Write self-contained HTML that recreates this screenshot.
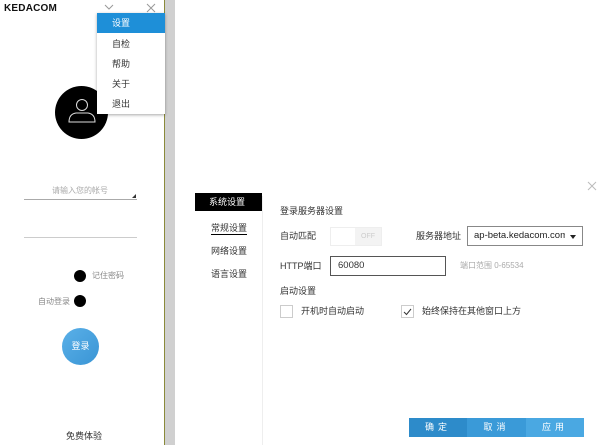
<!DOCTYPE html><html><head><meta charset="utf-8"><style>
*{margin:0;padding:0;box-sizing:border-box}
body{width:600px;height:445px;background:#fff;position:relative;overflow:hidden;font-family:"Liberation Sans","Noto Sans CJK SC",sans-serif;font-size:9px;color:#333;line-height:12px}
.a{position:absolute}
.c{display:flex;align-items:center}
</style></head><body>
<div class="a" style="left:4px;top:3px;font-weight:bold;font-size:10px;color:#111;letter-spacing:.2px">KEDACOM</div>
<svg class="a" style="left:104px;top:4px" width="10" height="6"><path d="M1 1 L5 5 L9 1" fill="none" stroke="#999" stroke-width="1"/></svg>
<svg class="a" style="left:146px;top:3px" width="10" height="10"><path d="M1 1 L9 9 M9 1 L1 9" fill="none" stroke="#999" stroke-width="1"/></svg>
<div class="a" style="left:164px;top:0;width:1px;height:445px;background:#8a8a3a"></div>
<div class="a" style="left:165px;top:0;width:10px;height:445px;background:#d0d0d0"></div>
<div class="a" style="left:55px;top:86px;width:53px;height:53px;border-radius:50%;background:#000"></div>
<svg class="a" style="left:66px;top:96px" width="32" height="30" viewBox="0 0 32 30"><circle cx="16" cy="9" r="5.5" fill="none" stroke="#ddd" stroke-width="1"/><path d="M3 26 Q3 18 10 17 L22 17 Q29 18 29 26 Z" fill="none" stroke="#ddd" stroke-width="1"/></svg>
<div class="a" style="left:97px;top:13px;width:68px;height:101px;background:#fff;box-shadow:0 1px 3px rgba(0,0,0,.35)"></div>
<div class="a" style="left:97px;top:13px;width:68px;height:20px;background:#1e8fd8"></div>
<div class="a" style="left:112px;top:17px;color:#fff">设置</div>
<div class="a" style="left:112px;top:38px">自检</div>
<div class="a" style="left:112px;top:58px">帮助</div>
<div class="a" style="left:112px;top:78px">关于</div>
<div class="a" style="left:112px;top:98px">退出</div>
<div class="a" style="left:52px;top:185px;color:#aaa;font-size:8px">请输入您的帐号</div>
<div class="a" style="left:24px;top:199px;width:113px;height:1px;background:#aaa"></div>
<div class="a" style="left:132px;top:194px;width:0;height:0;border-left:4px solid transparent;border-bottom:4px solid #333"></div>
<div class="a" style="left:24px;top:237px;width:113px;height:1px;background:#ccc"></div>
<div class="a" style="left:74px;top:270px;width:12px;height:12px;border-radius:50%;background:#000"></div>
<div class="a" style="left:92px;top:270px;color:#888;font-size:8px">记住密码</div>
<div class="a" style="left:38px;top:296px;color:#888;font-size:8px">自动登录</div>
<div class="a" style="left:74px;top:295px;width:12px;height:12px;border-radius:50%;background:#000"></div>
<div class="a" style="left:62px;top:328px;width:37px;height:37px;border-radius:50%;background:linear-gradient(135deg,#5ab0e8,#3a95d5);color:#fff;text-align:center;line-height:37px">登录</div>
<div class="a" style="left:66px;top:430px;color:#333">免费体验</div>
<svg class="a" style="left:587px;top:181px" width="10" height="10"><path d="M1 1 L9 9 M9 1 L1 9" fill="none" stroke="#bbb" stroke-width="1"/></svg>
<div class="a" style="left:195px;top:193px;width:67px;height:18px;background:#000;color:#fff;line-height:18px;padding-left:14px">系统设置</div>
<div class="a" style="left:262px;top:196px;width:1px;height:249px;background:#eee"></div>
<div class="a" style="left:211px;top:222px;border-bottom:1px solid #000;line-height:12px">常规设置</div>
<div class="a" style="left:211px;top:245px">网络设置</div>
<div class="a" style="left:211px;top:268px">语言设置</div>
<div class="a" style="left:280px;top:205px">登录服务器设置</div>
<div class="a" style="left:280px;top:230px">自动匹配</div>
<div class="a" style="left:330px;top:227px;width:52px;height:19px;border:1px solid #eee;background:#fff"></div>
<div class="a" style="left:355px;top:228px;width:26px;height:17px;background:#f3f3f3;color:#ccc;font-size:7px;text-align:center;line-height:17px">OFF</div>
<div class="a" style="left:416px;top:230px">服务器地址</div>
<div class="a c" style="left:467px;top:226px;width:116px;height:20px;border:1px solid #888;padding-left:6px;font-size:9.5px;color:#222;overflow:hidden;white-space:nowrap">ap-beta.kedacom.com</div>
<div class="a" style="left:565px;top:227px;width:16px;height:18px;background:#fff"></div>
<div class="a" style="left:570px;top:235px;border-left:3px solid transparent;border-right:3px solid transparent;border-top:4px solid #222"></div>
<div class="a" style="left:280px;top:260px;font-size:9px">HTTP端口</div>
<div class="a c" style="left:330px;top:256px;width:116px;height:20px;border:1px solid #555;padding-left:7px;font-size:9.5px">60080</div>
<div class="a" style="left:460px;top:260px;color:#aaa;font-size:8px">端口范围 0-65534</div>
<div class="a" style="left:280px;top:285px">启动设置</div>
<div class="a" style="left:280px;top:305px;width:13px;height:13px;border:1px solid #ccc"></div>
<div class="a" style="left:301px;top:305px">开机时自动启动</div>
<div class="a" style="left:401px;top:305px;width:13px;height:13px;border:1px solid #ccc"></div>
<svg class="a" style="left:403px;top:308px" width="9" height="8"><path d="M1 4 L3.5 6.5 L8 1" fill="none" stroke="#333" stroke-width="1"/></svg>
<div class="a" style="left:422px;top:305px">始终保持在其他窗口上方</div>
<div class="a" style="left:409px;top:418px;width:58px;height:19px;background:#2d8bca;color:#fff;text-align:center;line-height:19px;letter-spacing:4px">确定</div>
<div class="a" style="left:467px;top:418px;width:59px;height:19px;background:#3a9ad8;color:#fff;text-align:center;line-height:19px;letter-spacing:4px">取消</div>
<div class="a" style="left:526px;top:418px;width:58px;height:19px;background:#4aa8e2;color:#fff;text-align:center;line-height:19px;letter-spacing:4px">应用</div>
</body></html>
